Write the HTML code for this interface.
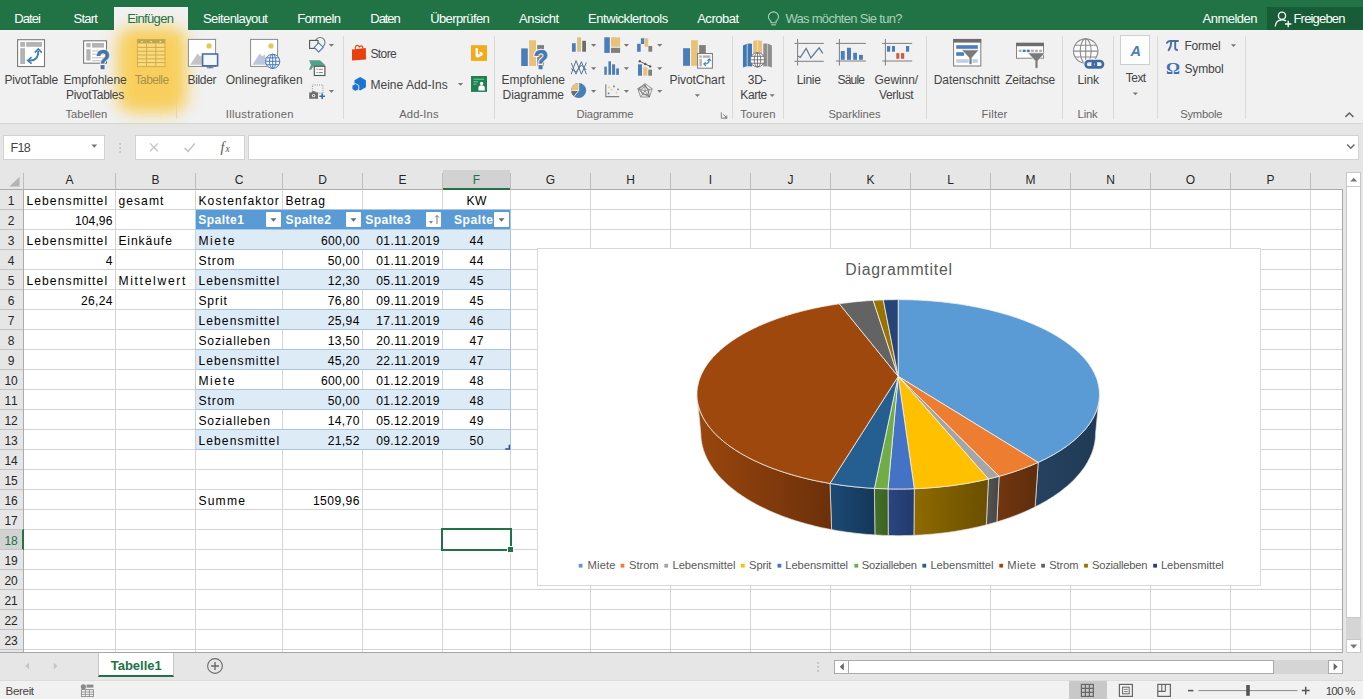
<!DOCTYPE html>
<html lang="de"><head><meta charset="utf-8"><title>Excel</title><style>

html,body{margin:0;padding:0}
body{width:1363px;height:699px;overflow:hidden;position:relative;background:#e6e6e6;font-family:"Liberation Sans",sans-serif}
.t{position:absolute;white-space:nowrap;line-height:1}
.a{position:absolute}
#tabs{left:0;top:0;width:1363px;height:30px;background:#217346}
#acttab{left:114px;top:7px;width:74px;height:24px;background:#f1f1f1}
#share{left:1267px;top:7px;width:96px;height:23px;background:#185c37}
#ribbon{left:0;top:30px;width:1363px;height:94px;background:#f1f1f1;border-bottom:1px solid #d6d6d6;box-sizing:border-box}
.sep{position:absolute;top:36px;width:1px;height:83px;background:#dadada}
#glowc{left:100px;top:7px;width:104px;height:120px;overflow:hidden;clip-path:polygon(14px 0,88px 0,88px 23px,104px 23px,104px 120px,0 120px,0 23px,14px 23px)}
#glow{left:17px;top:20px;width:70px;height:86px;border-radius:16px;background:#f8cf5c;filter:blur(8px)}
.box{position:absolute;background:#fff;border:1px solid #d2d2d2;box-sizing:border-box}
#sheet{left:0;top:170px;width:1343px;height:483px;background:#fff;overflow:hidden}
#colhdr{left:0;top:0;width:1343px;height:19px;background:#e6e6e6;border-bottom:1px solid #ababab}
#rowhdr{left:0;top:20px;width:23px;height:462px;background:#e6e6e6;border-right:1px solid #ababab}
.vl{position:absolute;top:20px;width:1px;height:462px;background:#d4d4d4}
.hl{position:absolute;left:24px;height:1px;width:1319px;background:#d4d4d4}
.rhl{position:absolute;left:0;width:23px;height:1px;background:#c4c4c4}
.chl{position:absolute;top:3px;width:1px;height:17px;background:#bdbdbd}

</style></head><body>
<div class="a" id="tabs"></div><div class="a" id="acttab"></div><div class="a" id="share"></div>
<div class="a" id="ribbon"></div>
<div class="sep" style="left:176px"></div>
<div class="sep" style="left:343px"></div>
<div class="sep" style="left:494px"></div>
<div class="sep" style="left:732px"></div>
<div class="sep" style="left:783px"></div>
<div class="sep" style="left:926px"></div>
<div class="sep" style="left:1062px"></div>
<div class="sep" style="left:1113px"></div>
<div class="sep" style="left:1157px"></div>
<div class="sep" style="left:1245px"></div>
<div class="a" id="glowc"><div class="a" id="glow"></div></div>
<div class="box" style="left:3px;top:135px;width:102px;height:25px"></div>
<div class="box" style="left:135px;top:135px;width:110px;height:25px"></div>
<div class="box" style="left:248px;top:135px;width:1111px;height:25px"></div>
<div class="a" id="sheet">
<div class="a" style="left:196px;top:40px;width:314px;height:19px;background:#5b9bd5"></div>
<div class="a" style="left:196px;top:60px;width:314px;height:19px;background:#ddebf7"></div>
<div class="a" style="left:196px;top:100px;width:314px;height:19px;background:#ddebf7"></div>
<div class="a" style="left:196px;top:140px;width:314px;height:19px;background:#ddebf7"></div>
<div class="a" style="left:196px;top:180px;width:314px;height:19px;background:#ddebf7"></div>
<div class="a" style="left:196px;top:220px;width:314px;height:19px;background:#ddebf7"></div>
<div class="a" style="left:196px;top:260px;width:314px;height:19px;background:#ddebf7"></div>
<div class="hl" style="top:39px"></div>
<div class="rhl" style="top:39px"></div>
<div class="hl" style="top:59px"></div>
<div class="rhl" style="top:59px"></div>
<div class="hl" style="top:79px"></div>
<div class="rhl" style="top:79px"></div>
<div class="hl" style="top:99px"></div>
<div class="rhl" style="top:99px"></div>
<div class="hl" style="top:119px"></div>
<div class="rhl" style="top:119px"></div>
<div class="hl" style="top:139px"></div>
<div class="rhl" style="top:139px"></div>
<div class="hl" style="top:159px"></div>
<div class="rhl" style="top:159px"></div>
<div class="hl" style="top:179px"></div>
<div class="rhl" style="top:179px"></div>
<div class="hl" style="top:199px"></div>
<div class="rhl" style="top:199px"></div>
<div class="hl" style="top:219px"></div>
<div class="rhl" style="top:219px"></div>
<div class="hl" style="top:239px"></div>
<div class="rhl" style="top:239px"></div>
<div class="hl" style="top:259px"></div>
<div class="rhl" style="top:259px"></div>
<div class="hl" style="top:279px"></div>
<div class="rhl" style="top:279px"></div>
<div class="hl" style="top:299px"></div>
<div class="rhl" style="top:299px"></div>
<div class="hl" style="top:319px"></div>
<div class="rhl" style="top:319px"></div>
<div class="hl" style="top:339px"></div>
<div class="rhl" style="top:339px"></div>
<div class="hl" style="top:359px"></div>
<div class="rhl" style="top:359px"></div>
<div class="hl" style="top:379px"></div>
<div class="rhl" style="top:379px"></div>
<div class="hl" style="top:399px"></div>
<div class="rhl" style="top:399px"></div>
<div class="hl" style="top:419px"></div>
<div class="rhl" style="top:419px"></div>
<div class="hl" style="top:439px"></div>
<div class="rhl" style="top:439px"></div>
<div class="hl" style="top:459px"></div>
<div class="rhl" style="top:459px"></div>
<div class="hl" style="top:479px"></div>
<div class="rhl" style="top:479px"></div>
<div class="vl" style="left:115px"></div>
<div class="vl" style="left:195px"></div>
<div class="vl" style="left:282px"></div>
<div class="vl" style="left:362px"></div>
<div class="vl" style="left:442px"></div>
<div class="vl" style="left:510px"></div>
<div class="vl" style="left:590px"></div>
<div class="vl" style="left:670px"></div>
<div class="vl" style="left:750px"></div>
<div class="vl" style="left:830px"></div>
<div class="vl" style="left:910px"></div>
<div class="vl" style="left:990px"></div>
<div class="vl" style="left:1070px"></div>
<div class="vl" style="left:1150px"></div>
<div class="vl" style="left:1230px"></div>
<div class="vl" style="left:1310px"></div>
<div class="a" style="left:196px;top:60px;width:314px;height:19px;background:#ddebf7"></div>
<div class="a" style="left:196px;top:100px;width:314px;height:19px;background:#ddebf7"></div>
<div class="a" style="left:196px;top:140px;width:314px;height:19px;background:#ddebf7"></div>
<div class="a" style="left:196px;top:180px;width:314px;height:19px;background:#ddebf7"></div>
<div class="a" style="left:196px;top:220px;width:314px;height:19px;background:#ddebf7"></div>
<div class="a" style="left:196px;top:260px;width:314px;height:19px;background:#ddebf7"></div>
<div class="a" style="left:196px;top:40px;width:314px;height:19px;background:#5b9bd5"></div>
<div class="a" style="left:196px;top:59px;width:315px;height:1px;background:#a9c6e4"></div>
<div class="a" style="left:196px;top:79px;width:315px;height:1px;background:#a9c6e4"></div>
<div class="a" style="left:196px;top:99px;width:315px;height:1px;background:#a9c6e4"></div>
<div class="a" style="left:196px;top:119px;width:315px;height:1px;background:#a9c6e4"></div>
<div class="a" style="left:196px;top:139px;width:315px;height:1px;background:#a9c6e4"></div>
<div class="a" style="left:196px;top:159px;width:315px;height:1px;background:#a9c6e4"></div>
<div class="a" style="left:196px;top:179px;width:315px;height:1px;background:#a9c6e4"></div>
<div class="a" style="left:196px;top:199px;width:315px;height:1px;background:#a9c6e4"></div>
<div class="a" style="left:196px;top:219px;width:315px;height:1px;background:#a9c6e4"></div>
<div class="a" style="left:196px;top:239px;width:315px;height:1px;background:#a9c6e4"></div>
<div class="a" style="left:196px;top:259px;width:315px;height:1px;background:#a9c6e4"></div>
<div class="a" style="left:196px;top:279px;width:315px;height:1px;background:#a9c6e4"></div>
<div class="a" style="left:196px;top:39px;width:315px;height:1px;background:#a9c6e4"></div>
<div class="a" style="left:510px;top:40px;width:1px;height:240px;background:#a9c6e4"></div>
<div class="a" style="left:195px;top:40px;width:1px;height:240px;background:#bcd0e6"></div>
<div class="a" style="left:266px;top:42px;width:15px;height:15px;background:#fff;border-radius:1px"></div>
<div class="a" style="left:346px;top:42px;width:15px;height:15px;background:#fff;border-radius:1px"></div>
<div class="a" style="left:426px;top:42px;width:15px;height:15px;background:#fff;border-radius:1px"></div>
<div class="a" style="left:494px;top:42px;width:15px;height:15px;background:#fff;border-radius:1px"></div>
<div class="a" id="colhdr"></div><div class="a" id="rowhdr"></div>
<div class="a" style="left:443px;top:0;width:67px;height:18px;background:#d2d2d2;border-bottom:2px solid #217346"></div>
<div class="a" style="left:0;top:359px;width:22px;height:21px;background:#d2d2d2;border-right:2px solid #217346"></div>
<div class="chl" style="left:23px"></div>
<div class="chl" style="left:115px"></div>
<div class="chl" style="left:195px"></div>
<div class="chl" style="left:282px"></div>
<div class="chl" style="left:362px"></div>
<div class="chl" style="left:442px"></div>
<div class="chl" style="left:510px"></div>
<div class="chl" style="left:590px"></div>
<div class="chl" style="left:670px"></div>
<div class="chl" style="left:750px"></div>
<div class="chl" style="left:830px"></div>
<div class="chl" style="left:910px"></div>
<div class="chl" style="left:990px"></div>
<div class="chl" style="left:1070px"></div>
<div class="chl" style="left:1150px"></div>
<div class="chl" style="left:1230px"></div>
<div class="chl" style="left:1310px"></div>
<div class="rhl" style="top:39px"></div>
<div class="rhl" style="top:59px"></div>
<div class="rhl" style="top:79px"></div>
<div class="rhl" style="top:99px"></div>
<div class="rhl" style="top:119px"></div>
<div class="rhl" style="top:139px"></div>
<div class="rhl" style="top:159px"></div>
<div class="rhl" style="top:179px"></div>
<div class="rhl" style="top:199px"></div>
<div class="rhl" style="top:219px"></div>
<div class="rhl" style="top:239px"></div>
<div class="rhl" style="top:259px"></div>
<div class="rhl" style="top:279px"></div>
<div class="rhl" style="top:299px"></div>
<div class="rhl" style="top:319px"></div>
<div class="rhl" style="top:339px"></div>
<div class="rhl" style="top:359px"></div>
<div class="rhl" style="top:379px"></div>
<div class="rhl" style="top:399px"></div>
<div class="rhl" style="top:419px"></div>
<div class="rhl" style="top:439px"></div>
<div class="rhl" style="top:459px"></div>
<div class="rhl" style="top:479px"></div>
<div class="a" style="left:441px;top:358px;width:67px;height:19px;border:2px solid #217346"></div>
<div class="a" style="left:508px;top:377px;width:5px;height:5px;background:#217346;border:1px solid #fff;margin:-1px"></div>
<div class="a" style="left:537px;top:78px;width:724px;height:338px;background:#fff;border:1px solid #d9d9d9;box-sizing:border-box"></div>
<div class="a" style="left:1342px;top:19px;width:1px;height:463px;background:#a6a6a6"></div>
<div class="a" style="left:0;top:482px;width:1343px;height:1px;background:#a6a6a6"></div>
</div>
<div class="a" style="left:0;top:680px;width:1363px;height:19px;background:#f1f1f1;border-top:1px solid #dcdcdc;box-sizing:border-box"></div>
<div class="a" style="left:98px;top:653px;width:76px;height:24px;background:#fff;border-bottom:2px solid #217346;box-sizing:border-box;border-left:1px solid #c8c8c8;border-right:1px solid #c8c8c8"></div>
<div class="box" style="left:1346px;top:172px;width:15px;height:15px;border-color:#c8c8c8"></div>
<div class="box" style="left:1346px;top:186px;width:15px;height:432px;border-color:#c8c8c8"></div>
<div class="a" style="left:1346px;top:618px;width:15px;height:21px;background:#d5d5d5"></div>
<div class="box" style="left:1346px;top:639px;width:15px;height:14px;border-color:#c8c8c8"></div>
<div class="box" style="left:834px;top:660px;width:15px;height:14px;border-color:#ababab"></div>
<div class="box" style="left:848px;top:660px;width:426px;height:14px;border-color:#ababab"></div>
<div class="a" style="left:1274px;top:660px;width:54px;height:14px;background:#d5d5d5"></div>
<div class="box" style="left:1328px;top:660px;width:15px;height:14px;border-color:#ababab"></div>
<div class="a" style="left:1069px;top:681px;width:38px;height:18px;background:#c8c8c8"></div>
<svg class="a" style="left:0;top:0" width="1363" height="699" viewBox="0 0 1363 699">
<defs><linearGradient id="sg0" gradientUnits="userSpaceOnUse" x1="1035.1" y1="0" x2="1099.4" y2="0"><stop offset="0" stop-color="#264260"/><stop offset="1" stop-color="#1f3a54"/></linearGradient><linearGradient id="sg1" gradientUnits="userSpaceOnUse" x1="996.9" y1="0" x2="1038.2" y2="0"><stop offset="0" stop-color="#713610"/><stop offset="1" stop-color="#5e2d0c"/></linearGradient><linearGradient id="sg2" gradientUnits="userSpaceOnUse" x1="986.3" y1="0" x2="999.1" y2="0"><stop offset="0" stop-color="#555555"/><stop offset="1" stop-color="#454545"/></linearGradient><linearGradient id="sg3" gradientUnits="userSpaceOnUse" x1="913.9" y1="0" x2="988.4" y2="0"><stop offset="0" stop-color="#8f6a00"/><stop offset="1" stop-color="#6a4f00"/></linearGradient><linearGradient id="sg4" gradientUnits="userSpaceOnUse" x1="888.0" y1="0" x2="914.3" y2="0"><stop offset="0" stop-color="#2a4580"/><stop offset="1" stop-color="#223a6c"/></linearGradient><linearGradient id="sg5" gradientUnits="userSpaceOnUse" x1="874.4" y1="0" x2="888.2" y2="0"><stop offset="0" stop-color="#457028"/><stop offset="1" stop-color="#3a6122"/></linearGradient><linearGradient id="sg6" gradientUnits="userSpaceOnUse" x1="830.0" y1="0" x2="874.9" y2="0"><stop offset="0" stop-color="#1c4a75"/><stop offset="1" stop-color="#14375a"/></linearGradient><linearGradient id="sg7" gradientUnits="userSpaceOnUse" x1="697.0" y1="0" x2="831.6" y2="0"><stop offset="0" stop-color="#9a460e"/><stop offset="1" stop-color="#6c300a"/></linearGradient></defs><path d="M1099.4,394.3 L1099.4,395.3 L1099.4,396.3 L1099.3,397.3 L1099.3,398.2 L1099.2,399.2 L1099.1,400.2 L1098.9,401.2 L1098.8,402.2 L1098.6,403.1 L1098.4,404.1 L1098.1,405.1 L1097.9,406.1 L1097.6,407.1 L1097.3,408.1 L1097.0,409.1 L1096.7,410.1 L1096.3,411.0 L1095.9,412.0 L1095.5,413.0 L1095.1,414.0 L1094.6,415.0 L1094.1,416.0 L1093.6,417.0 L1093.1,417.9 L1092.5,418.9 L1092.0,419.9 L1091.4,420.9 L1090.7,421.9 L1090.1,422.9 L1089.4,423.8 L1088.7,424.8 L1088.0,425.8 L1087.3,426.8 L1086.5,427.7 L1085.7,428.7 L1084.9,429.7 L1084.1,430.6 L1083.2,431.6 L1082.3,432.6 L1081.4,433.5 L1080.5,434.5 L1079.5,435.4 L1078.5,436.4 L1077.5,437.3 L1076.5,438.2 L1075.5,439.2 L1074.4,440.1 L1073.3,441.0 L1072.2,441.9 L1071.0,442.9 L1069.8,443.8 L1068.6,444.7 L1067.4,445.6 L1066.2,446.5 L1064.9,447.4 L1063.6,448.3 L1062.3,449.2 L1061.0,450.0 L1059.6,450.9 L1058.2,451.8 L1056.8,452.6 L1055.4,453.5 L1053.9,454.3 L1052.5,455.2 L1051.0,456.0 L1049.4,456.8 L1047.9,457.6 L1046.3,458.4 L1044.7,459.2 L1043.1,460.0 L1041.5,460.8 L1039.8,461.6 L1038.2,462.4 L1035.1,506.9 L1036.8,506.1 L1038.4,505.2 L1040.0,504.4 L1041.6,503.5 L1043.1,502.7 L1044.7,501.8 L1046.2,500.9 L1047.7,500.0 L1049.1,499.1 L1050.6,498.2 L1052.0,497.3 L1053.4,496.4 L1054.8,495.5 L1056.2,494.5 L1057.5,493.6 L1058.8,492.7 L1060.1,491.7 L1061.4,490.7 L1062.6,489.8 L1063.8,488.8 L1065.0,487.8 L1066.2,486.9 L1067.4,485.9 L1068.5,484.9 L1069.6,483.9 L1070.7,482.9 L1071.8,481.9 L1072.8,480.9 L1073.8,479.9 L1074.8,478.9 L1075.8,477.8 L1076.7,476.8 L1077.6,475.8 L1078.5,474.8 L1079.4,473.7 L1080.3,472.7 L1081.1,471.6 L1081.9,470.6 L1082.7,469.6 L1083.4,468.5 L1084.2,467.5 L1084.9,466.4 L1085.6,465.4 L1086.2,464.3 L1086.9,463.2 L1087.5,462.2 L1088.1,461.1 L1088.6,460.1 L1089.2,459.0 L1089.7,457.9 L1090.2,456.9 L1090.7,455.8 L1091.1,454.8 L1091.6,453.7 L1092.0,452.6 L1092.4,451.6 L1092.7,450.5 L1093.1,449.4 L1093.4,448.4 L1093.7,447.3 L1094.0,446.2 L1094.2,445.2 L1094.5,444.1 L1094.7,443.0 L1094.9,442.0 L1095.0,440.9 L1095.2,439.9 L1095.3,438.8 L1095.4,437.7 L1095.5,436.7 L1095.5,435.6 L1095.6,434.6 L1095.6,433.5Z" fill="url(#sg0)" stroke="#e8e4dc" stroke-width="0.7" stroke-linejoin="round"/><path d="M1038.2,462.4 L1036.4,463.2 L1034.6,463.9 L1032.8,464.7 L1031.0,465.5 L1029.2,466.2 L1027.3,467.0 L1025.4,467.7 L1023.5,468.4 L1021.6,469.1 L1019.7,469.8 L1017.7,470.5 L1015.7,471.2 L1013.7,471.9 L1011.7,472.5 L1009.6,473.2 L1007.6,473.8 L1005.5,474.5 L1003.4,475.1 L1001.3,475.7 L999.1,476.3 L996.9,521.9 L999.0,521.3 L1001.0,520.6 L1003.1,519.9 L1005.1,519.3 L1007.2,518.6 L1009.2,517.9 L1011.1,517.2 L1013.1,516.4 L1015.1,515.7 L1017.0,515.0 L1018.9,514.2 L1020.8,513.4 L1022.6,512.7 L1024.5,511.9 L1026.3,511.1 L1028.1,510.3 L1029.9,509.4 L1031.7,508.6 L1033.4,507.8 L1035.1,506.9Z" fill="url(#sg1)" stroke="#e8e4dc" stroke-width="0.7" stroke-linejoin="round"/><path d="M999.1,476.3 L997.0,476.8 L994.9,477.4 L992.7,477.9 L990.5,478.5 L988.4,479.0 L986.3,524.8 L988.5,524.3 L990.6,523.7 L992.7,523.1 L994.8,522.5 L996.9,521.9Z" fill="url(#sg2)" stroke="#e8e4dc" stroke-width="0.7" stroke-linejoin="round"/><path d="M988.4,479.0 L986.1,479.5 L983.9,480.0 L981.7,480.5 L979.4,481.0 L977.1,481.4 L974.8,481.9 L972.5,482.3 L970.2,482.8 L967.9,483.2 L965.5,483.6 L963.2,484.0 L960.8,484.3 L958.5,484.7 L956.1,485.0 L953.7,485.4 L951.3,485.7 L948.9,486.0 L946.4,486.3 L944.0,486.5 L941.6,486.8 L939.1,487.1 L936.6,487.3 L934.2,487.5 L931.7,487.7 L929.2,487.9 L926.8,488.1 L924.3,488.2 L921.8,488.4 L919.3,488.5 L916.8,488.6 L914.3,488.7 L913.9,535.3 L916.4,535.2 L918.8,535.1 L921.2,535.0 L923.7,534.8 L926.1,534.6 L928.5,534.4 L931.0,534.2 L933.4,534.0 L935.8,533.8 L938.2,533.5 L940.6,533.3 L943.0,533.0 L945.3,532.7 L947.7,532.4 L950.1,532.1 L952.4,531.7 L954.8,531.4 L957.1,531.0 L959.4,530.6 L961.7,530.2 L964.0,529.8 L966.3,529.3 L968.6,528.9 L970.9,528.4 L973.1,528.0 L975.3,527.5 L977.6,527.0 L979.8,526.5 L982.0,525.9 L984.2,525.4 L986.3,524.8Z" fill="url(#sg3)" stroke="#e8e4dc" stroke-width="0.7" stroke-linejoin="round"/><path d="M914.3,488.7 L911.7,488.8 L909.0,488.9 L906.4,489.0 L903.8,489.0 L901.2,489.0 L898.5,489.0 L895.9,489.0 L893.3,489.0 L890.6,489.0 L888.0,488.9 L888.2,535.5 L890.8,535.6 L893.4,535.6 L895.9,535.7 L898.5,535.7 L901.1,535.7 L903.7,535.6 L906.2,535.6 L908.8,535.5 L911.4,535.4 L913.9,535.3Z" fill="url(#sg4)" stroke="#e8e4dc" stroke-width="0.7" stroke-linejoin="round"/><path d="M888.0,488.9 L885.3,488.8 L882.5,488.7 L879.8,488.6 L877.1,488.5 L874.4,488.4 L874.9,534.9 L877.6,535.1 L880.2,535.2 L882.9,535.4 L885.6,535.5 L888.2,535.5Z" fill="url(#sg5)" stroke="#e8e4dc" stroke-width="0.7" stroke-linejoin="round"/><path d="M874.4,488.4 L871.8,488.2 L869.3,488.1 L866.8,487.9 L864.3,487.7 L861.8,487.5 L859.3,487.2 L856.8,487.0 L854.3,486.8 L851.9,486.5 L849.4,486.2 L846.9,485.9 L844.5,485.6 L842.1,485.3 L839.6,484.9 L837.2,484.6 L834.8,484.2 L832.4,483.8 L830.0,483.4 L831.6,529.6 L833.9,530.1 L836.2,530.5 L838.6,530.9 L841.0,531.2 L843.3,531.6 L845.7,532.0 L848.1,532.3 L850.5,532.6 L852.9,532.9 L855.3,533.2 L857.8,533.5 L860.2,533.7 L862.6,534.0 L865.1,534.2 L867.5,534.4 L870.0,534.6 L872.4,534.8 L874.9,534.9Z" fill="url(#sg6)" stroke="#e8e4dc" stroke-width="0.7" stroke-linejoin="round"/><path d="M830.0,483.4 L827.8,483.0 L825.5,482.6 L823.3,482.2 L821.0,481.8 L818.8,481.3 L816.6,480.9 L814.4,480.4 L812.2,479.9 L810.0,479.5 L807.9,479.0 L805.7,478.4 L803.6,477.9 L801.5,477.4 L799.4,476.8 L797.3,476.3 L795.2,475.7 L793.2,475.1 L791.2,474.5 L789.2,473.9 L787.2,473.3 L785.2,472.7 L783.2,472.1 L781.3,471.4 L779.4,470.8 L777.5,470.1 L775.6,469.4 L773.7,468.7 L771.9,468.0 L770.0,467.3 L768.2,466.6 L766.4,465.9 L764.7,465.2 L762.9,464.4 L761.2,463.7 L759.5,462.9 L757.8,462.2 L756.1,461.4 L754.5,460.6 L752.9,459.8 L751.3,459.0 L749.7,458.2 L748.1,457.4 L746.6,456.6 L745.1,455.8 L743.6,455.0 L742.1,454.1 L740.7,453.3 L739.3,452.4 L737.9,451.6 L736.5,450.7 L735.2,449.8 L733.8,449.0 L732.5,448.1 L731.2,447.2 L730.0,446.3 L728.8,445.4 L727.5,444.5 L726.4,443.6 L725.2,442.7 L724.0,441.8 L722.9,440.9 L721.8,439.9 L720.8,439.0 L719.7,438.1 L718.7,437.2 L717.7,436.2 L716.7,435.3 L715.8,434.3 L714.9,433.4 L714.0,432.4 L713.1,431.5 L712.2,430.5 L711.4,429.5 L710.6,428.6 L709.8,427.6 L709.0,426.7 L708.3,425.7 L707.6,424.7 L706.9,423.7 L706.2,422.8 L705.6,421.8 L705.0,420.8 L704.4,419.8 L703.8,418.8 L703.3,417.9 L702.7,416.9 L702.2,415.9 L701.8,414.9 L701.3,413.9 L700.9,412.9 L700.5,412.0 L700.1,411.0 L699.7,410.0 L699.4,409.0 L699.1,408.0 L698.8,407.0 L698.5,406.1 L698.3,405.1 L698.0,404.1 L697.8,403.1 L697.6,402.1 L697.5,401.2 L697.3,400.2 L697.2,399.2 L697.1,398.2 L697.1,397.2 L697.0,396.3 L697.0,395.3 L697.0,394.3 L700.8,433.5 L700.8,434.6 L700.9,435.6 L700.9,436.7 L701.0,437.7 L701.1,438.8 L701.2,439.8 L701.4,440.9 L701.5,441.9 L701.7,443.0 L701.9,444.1 L702.2,445.1 L702.4,446.2 L702.7,447.2 L703.0,448.3 L703.3,449.4 L703.6,450.4 L704.0,451.5 L704.4,452.6 L704.8,453.6 L705.2,454.7 L705.7,455.7 L706.2,456.8 L706.7,457.9 L707.2,458.9 L707.7,460.0 L708.3,461.0 L708.9,462.1 L709.5,463.1 L710.1,464.2 L710.8,465.2 L711.5,466.3 L712.2,467.3 L712.9,468.4 L713.6,469.4 L714.4,470.5 L715.2,471.5 L716.0,472.6 L716.9,473.6 L717.7,474.6 L718.6,475.6 L719.5,476.7 L720.5,477.7 L721.4,478.7 L722.4,479.7 L723.4,480.7 L724.5,481.7 L725.5,482.7 L726.6,483.7 L727.7,484.7 L728.8,485.7 L730.0,486.7 L731.1,487.7 L732.3,488.6 L733.5,489.6 L734.8,490.6 L736.0,491.5 L737.3,492.5 L738.6,493.4 L740.0,494.3 L741.3,495.3 L742.7,496.2 L744.1,497.1 L745.5,498.0 L746.9,498.9 L748.4,499.8 L749.9,500.7 L751.4,501.6 L752.9,502.5 L754.5,503.3 L756.0,504.2 L757.6,505.0 L759.2,505.9 L760.9,506.7 L762.5,507.5 L764.2,508.3 L765.9,509.1 L767.6,509.9 L769.3,510.7 L771.1,511.5 L772.8,512.3 L774.6,513.0 L776.4,513.8 L778.3,514.5 L780.1,515.2 L782.0,516.0 L783.9,516.7 L785.8,517.4 L787.7,518.0 L789.6,518.7 L791.6,519.4 L793.5,520.0 L795.5,520.7 L797.5,521.3 L799.6,521.9 L801.6,522.5 L803.6,523.1 L805.7,523.7 L807.8,524.2 L809.9,524.8 L812.0,525.3 L814.1,525.9 L816.3,526.4 L818.4,526.9 L820.6,527.4 L822.8,527.9 L824.9,528.3 L827.1,528.8 L829.4,529.2 L831.6,529.6Z" fill="url(#sg7)" stroke="#e8e4dc" stroke-width="0.7" stroke-linejoin="round"/><path d="M898.2,376.4 L898.2,299.6 L899.9,299.6 L901.5,299.7 L903.2,299.7 L904.9,299.7 L906.5,299.7 L908.2,299.8 L909.9,299.8 L911.5,299.8 L913.2,299.9 L914.8,300.0 L916.5,300.0 L918.2,300.1 L919.8,300.2 L921.5,300.3 L923.1,300.4 L924.8,300.5 L926.4,300.6 L928.1,300.7 L929.8,300.8 L931.4,300.9 L933.0,301.1 L934.7,301.2 L936.3,301.4 L938.0,301.5 L939.6,301.7 L941.3,301.8 L942.9,302.0 L944.5,302.2 L946.2,302.4 L947.8,302.6 L949.4,302.8 L951.0,303.0 L952.6,303.2 L954.3,303.4 L955.9,303.6 L957.5,303.8 L959.1,304.1 L960.7,304.3 L962.3,304.6 L963.9,304.8 L965.5,305.1 L967.1,305.4 L968.7,305.6 L970.2,305.9 L971.8,306.2 L973.4,306.5 L975.0,306.8 L976.5,307.1 L978.1,307.4 L979.6,307.7 L981.2,308.1 L982.7,308.4 L984.3,308.7 L985.8,309.1 L987.4,309.4 L988.9,309.8 L990.4,310.2 L991.9,310.5 L993.4,310.9 L994.9,311.3 L996.4,311.7 L997.9,312.1 L999.4,312.5 L1000.9,312.9 L1002.4,313.3 L1003.8,313.7 L1005.3,314.2 L1006.8,314.6 L1008.2,315.0 L1009.7,315.5 L1011.1,315.9 L1012.5,316.4 L1014.0,316.9 L1015.4,317.3 L1016.8,317.8 L1018.2,318.3 L1019.6,318.8 L1021.0,319.3 L1022.3,319.8 L1023.7,320.3 L1025.1,320.8 L1026.4,321.4 L1027.8,321.9 L1029.1,322.4 L1030.5,323.0 L1031.8,323.5 L1033.1,324.1 L1034.4,324.6 L1035.7,325.2 L1037.0,325.8 L1038.3,326.3 L1039.5,326.9 L1040.8,327.5 L1042.1,328.1 L1043.3,328.7 L1044.5,329.3 L1045.8,329.9 L1047.0,330.6 L1048.2,331.2 L1049.4,331.8 L1050.5,332.5 L1051.7,333.1 L1052.9,333.8 L1054.0,334.4 L1055.2,335.1 L1056.3,335.7 L1057.4,336.4 L1058.5,337.1 L1059.6,337.8 L1060.7,338.5 L1061.8,339.2 L1062.8,339.9 L1063.9,340.6 L1064.9,341.3 L1065.9,342.0 L1066.9,342.7 L1067.9,343.5 L1068.9,344.2 L1069.9,344.9 L1070.9,345.7 L1071.8,346.4 L1072.7,347.2 L1073.7,348.0 L1074.6,348.7 L1075.4,349.5 L1076.3,350.3 L1077.2,351.1 L1078.0,351.8 L1078.9,352.6 L1079.7,353.4 L1080.5,354.2 L1081.3,355.0 L1082.1,355.9 L1082.8,356.7 L1083.6,357.5 L1084.3,358.3 L1085.0,359.2 L1085.7,360.0 L1086.4,360.8 L1087.1,361.7 L1087.8,362.5 L1088.4,363.4 L1089.0,364.2 L1089.6,365.1 L1090.2,366.0 L1090.8,366.9 L1091.3,367.7 L1091.9,368.6 L1092.4,369.5 L1092.9,370.4 L1093.4,371.3 L1093.9,372.2 L1094.3,373.1 L1094.7,374.0 L1095.2,374.9 L1095.5,375.8 L1095.9,376.7 L1096.3,377.6 L1096.6,378.6 L1097.0,379.5 L1097.3,380.4 L1097.5,381.3 L1097.8,382.3 L1098.0,383.2 L1098.3,384.2 L1098.5,385.1 L1098.7,386.0 L1098.8,387.0 L1099.0,387.9 L1099.1,388.9 L1099.2,389.8 L1099.3,390.8 L1099.4,391.8 L1099.4,392.7 L1099.4,393.7 L1099.4,394.7 L1099.4,395.6 L1099.4,396.6 L1099.3,397.6 L1099.2,398.5 L1099.1,399.5 L1099.0,400.5 L1098.9,401.5 L1098.7,402.5 L1098.5,403.4 L1098.3,404.4 L1098.1,405.4 L1097.8,406.4 L1097.5,407.4 L1097.2,408.3 L1096.9,409.3 L1096.6,410.3 L1096.2,411.3 L1095.8,412.3 L1095.4,413.3 L1094.9,414.2 L1094.5,415.2 L1094.0,416.2 L1093.5,417.2 L1093.0,418.2 L1092.4,419.2 L1091.8,420.1 L1091.2,421.1 L1090.6,422.1 L1090.0,423.1 L1089.3,424.0 L1088.6,425.0 L1087.9,426.0 L1087.1,426.9 L1086.4,427.9 L1085.6,428.9 L1084.8,429.8 L1083.9,430.8 L1083.1,431.7 L1082.2,432.7 L1081.3,433.7 L1080.3,434.6 L1079.4,435.5 L1078.4,436.5 L1077.4,437.4 L1076.4,438.4 L1075.3,439.3 L1074.3,440.2 L1073.2,441.1 L1072.0,442.1 L1070.9,443.0 L1069.7,443.9 L1068.5,444.8 L1067.3,445.7 L1066.1,446.6 L1064.8,447.5 L1063.5,448.3 L1062.2,449.2 L1060.9,450.1 L1059.5,451.0 L1058.1,451.8 L1056.7,452.7 L1055.3,453.5 L1053.9,454.4 L1052.4,455.2 L1050.9,456.0 L1049.4,456.8 L1047.8,457.7 L1046.3,458.5 L1044.7,459.3 L1043.1,460.0 L1041.5,460.8 L1039.8,461.6 L1038.2,462.4Z" fill="#5B9BD5" stroke="#f4f1ea" stroke-width="0.8" stroke-linejoin="round"/><path d="M898.2,376.4 L1038.2,462.4 L1036.4,463.2 L1034.6,463.9 L1032.8,464.7 L1031.0,465.5 L1029.2,466.2 L1027.3,467.0 L1025.4,467.7 L1023.5,468.4 L1021.6,469.1 L1019.7,469.8 L1017.7,470.5 L1015.7,471.2 L1013.7,471.9 L1011.7,472.5 L1009.6,473.2 L1007.6,473.8 L1005.5,474.5 L1003.4,475.1 L1001.3,475.7 L999.1,476.3Z" fill="#ED7D31" stroke="#f4f1ea" stroke-width="0.8" stroke-linejoin="round"/><path d="M898.2,376.4 L999.1,476.3 L997.0,476.8 L994.9,477.4 L992.7,477.9 L990.5,478.5 L988.4,479.0Z" fill="#A5A5A5" stroke="#f4f1ea" stroke-width="0.8" stroke-linejoin="round"/><path d="M898.2,376.4 L988.4,479.0 L986.1,479.5 L983.9,480.0 L981.7,480.5 L979.4,481.0 L977.1,481.4 L974.8,481.9 L972.5,482.3 L970.2,482.8 L967.9,483.2 L965.5,483.6 L963.2,484.0 L960.8,484.3 L958.5,484.7 L956.1,485.0 L953.7,485.4 L951.3,485.7 L948.9,486.0 L946.4,486.3 L944.0,486.5 L941.6,486.8 L939.1,487.1 L936.6,487.3 L934.2,487.5 L931.7,487.7 L929.2,487.9 L926.8,488.1 L924.3,488.2 L921.8,488.4 L919.3,488.5 L916.8,488.6 L914.3,488.7Z" fill="#FFC000" stroke="#f4f1ea" stroke-width="0.8" stroke-linejoin="round"/><path d="M898.2,376.4 L914.3,488.7 L911.7,488.8 L909.0,488.9 L906.4,489.0 L903.8,489.0 L901.2,489.0 L898.5,489.0 L895.9,489.0 L893.3,489.0 L890.6,489.0 L888.0,488.9Z" fill="#4472C4" stroke="#f4f1ea" stroke-width="0.8" stroke-linejoin="round"/><path d="M898.2,376.4 L888.0,488.9 L885.3,488.8 L882.5,488.7 L879.8,488.6 L877.1,488.5 L874.4,488.4Z" fill="#70AD47" stroke="#f4f1ea" stroke-width="0.8" stroke-linejoin="round"/><path d="M898.2,376.4 L874.4,488.4 L871.8,488.2 L869.3,488.1 L866.8,487.9 L864.3,487.7 L861.8,487.5 L859.3,487.2 L856.8,487.0 L854.3,486.8 L851.9,486.5 L849.4,486.2 L846.9,485.9 L844.5,485.6 L842.1,485.3 L839.6,484.9 L837.2,484.6 L834.8,484.2 L832.4,483.8 L830.0,483.4Z" fill="#255E91" stroke="#f4f1ea" stroke-width="0.8" stroke-linejoin="round"/><path d="M898.2,376.4 L830.0,483.4 L827.8,483.0 L825.5,482.6 L823.3,482.2 L821.0,481.8 L818.8,481.4 L816.6,480.9 L814.4,480.4 L812.2,480.0 L810.0,479.5 L807.9,479.0 L805.8,478.4 L803.6,477.9 L801.5,477.4 L799.4,476.8 L797.3,476.3 L795.3,475.7 L793.2,475.1 L791.2,474.5 L789.2,473.9 L787.2,473.3 L785.2,472.7 L783.3,472.1 L781.3,471.4 L779.4,470.8 L777.5,470.1 L775.6,469.4 L773.8,468.8 L771.9,468.1 L770.1,467.4 L768.3,466.7 L766.5,465.9 L764.7,465.2 L763.0,464.5 L761.3,463.7 L759.6,463.0 L757.9,462.2 L756.2,461.4 L754.6,460.7 L752.9,459.9 L751.3,459.1 L749.8,458.3 L748.2,457.5 L746.7,456.7 L745.2,455.8 L743.7,455.0 L742.2,454.2 L740.8,453.3 L739.4,452.5 L738.0,451.6 L736.6,450.8 L735.2,449.9 L733.9,449.0 L732.6,448.1 L731.3,447.3 L730.1,446.4 L728.8,445.5 L727.6,444.6 L726.4,443.7 L725.3,442.8 L724.1,441.9 L723.0,440.9 L721.9,440.0 L720.8,439.1 L719.8,438.2 L718.8,437.2 L717.8,436.3 L716.8,435.3 L715.8,434.4 L714.9,433.4 L714.0,432.5 L713.1,431.5 L712.3,430.6 L711.5,429.6 L710.6,428.7 L709.9,427.7 L709.1,426.7 L708.4,425.8 L707.7,424.8 L707.0,423.8 L706.3,422.8 L705.7,421.9 L705.0,420.9 L704.4,419.9 L703.9,418.9 L703.3,418.0 L702.8,417.0 L702.3,416.0 L701.8,415.0 L701.4,414.0 L700.9,413.0 L700.5,412.1 L700.1,411.1 L699.8,410.1 L699.4,409.1 L699.1,408.1 L698.8,407.1 L698.5,406.2 L698.3,405.2 L698.1,404.2 L697.8,403.2 L697.7,402.2 L697.5,401.3 L697.4,400.3 L697.2,399.3 L697.1,398.3 L697.1,397.4 L697.0,396.4 L697.0,395.4 L697.0,394.5 L697.0,393.5 L697.0,392.5 L697.0,391.6 L697.1,390.6 L697.2,389.6 L697.3,388.7 L697.4,387.7 L697.6,386.8 L697.8,385.8 L698.0,384.9 L698.2,383.9 L698.4,383.0 L698.7,382.1 L698.9,381.1 L699.2,380.2 L699.5,379.3 L699.8,378.4 L700.2,377.4 L700.6,376.5 L700.9,375.6 L701.3,374.7 L701.8,373.8 L702.2,372.9 L702.6,372.0 L703.1,371.1 L703.6,370.2 L704.1,369.3 L704.6,368.4 L705.2,367.5 L705.7,366.7 L706.3,365.8 L706.9,364.9 L707.5,364.1 L708.1,363.2 L708.8,362.3 L709.4,361.5 L710.1,360.7 L710.8,359.8 L711.5,359.0 L712.2,358.1 L713.0,357.3 L713.7,356.5 L714.5,355.7 L715.3,354.9 L716.1,354.1 L716.9,353.3 L717.7,352.5 L718.5,351.7 L719.4,350.9 L720.3,350.1 L721.1,349.3 L722.0,348.6 L722.9,347.8 L723.9,347.0 L724.8,346.3 L725.8,345.5 L726.7,344.8 L727.7,344.0 L728.7,343.3 L729.7,342.6 L730.7,341.8 L731.7,341.1 L732.8,340.4 L733.8,339.7 L734.9,339.0 L735.9,338.3 L737.0,337.6 L738.1,336.9 L739.2,336.3 L740.4,335.6 L741.5,334.9 L742.6,334.3 L743.8,333.6 L744.9,333.0 L746.1,332.3 L747.3,331.7 L748.5,331.0 L749.7,330.4 L750.9,329.8 L752.1,329.2 L753.4,328.6 L754.6,328.0 L755.9,327.4 L757.1,326.8 L758.4,326.2 L759.7,325.6 L761.0,325.1 L762.3,324.5 L763.6,323.9 L764.9,323.4 L766.2,322.8 L767.6,322.3 L768.9,321.8 L770.3,321.2 L771.6,320.7 L773.0,320.2 L774.4,319.7 L775.7,319.2 L777.1,318.7 L778.5,318.2 L779.9,317.7 L781.3,317.2 L782.8,316.8 L784.2,316.3 L785.6,315.8 L787.1,315.4 L788.5,314.9 L790.0,314.5 L791.4,314.1 L792.9,313.6 L794.3,313.2 L795.8,312.8 L797.3,312.4 L798.8,312.0 L800.3,311.6 L801.8,311.2 L803.3,310.8 L804.8,310.5 L806.3,310.1 L807.9,309.7 L809.4,309.4 L810.9,309.0 L812.5,308.7 L814.0,308.3 L815.5,308.0 L817.1,307.7 L818.7,307.4 L820.2,307.0 L821.8,306.7 L823.4,306.4 L824.9,306.1 L826.5,305.9 L828.1,305.6 L829.7,305.3 L831.3,305.0 L832.9,304.8 L834.5,304.5 L836.1,304.3 L837.7,304.0 L839.3,303.8Z" fill="#9E480E" stroke="#f4f1ea" stroke-width="0.8" stroke-linejoin="round"/><path d="M898.2,376.4 L839.3,303.8 L840.9,303.6 L842.6,303.3 L844.3,303.1 L846.0,302.9 L847.7,302.7 L849.3,302.5 L851.0,302.3 L852.7,302.1 L854.4,301.9 L856.1,301.7 L857.8,301.6 L859.5,301.4 L861.2,301.3 L862.9,301.1 L864.6,301.0 L866.4,300.8 L868.1,300.7 L869.8,300.6 L871.5,300.5 L873.2,300.4Z" fill="#636363" stroke="#f4f1ea" stroke-width="0.8" stroke-linejoin="round"/><path d="M898.2,376.4 L873.2,300.4 L874.9,300.3 L876.6,300.2 L878.3,300.1 L880.0,300.0 L881.6,300.0 L883.3,299.9Z" fill="#997300" stroke="#f4f1ea" stroke-width="0.8" stroke-linejoin="round"/><path d="M898.2,376.4 L883.3,299.9 L885.2,299.8 L887.0,299.8 L888.9,299.7 L890.8,299.7 L892.6,299.7 L894.5,299.7 L896.3,299.6 L898.2,299.6Z" fill="#264478" stroke="#f4f1ea" stroke-width="0.8" stroke-linejoin="round"/>
<rect x="578.7" y="563.8" width="3.8" height="3.8" fill="#5B9BD5"/>
<rect x="620.6" y="563.8" width="3.8" height="3.8" fill="#ED7D31"/>
<rect x="664.3" y="563.8" width="3.8" height="3.8" fill="#A5A5A5"/>
<rect x="740.9" y="563.8" width="3.8" height="3.8" fill="#FFC000"/>
<rect x="777.5" y="563.8" width="3.8" height="3.8" fill="#4472C4"/>
<rect x="854.4" y="563.8" width="3.8" height="3.8" fill="#70AD47"/>
<rect x="922.4" y="563.8" width="3.8" height="3.8" fill="#255E91"/>
<rect x="999.3" y="563.8" width="3.8" height="3.8" fill="#9E480E"/>
<rect x="1041.2" y="563.8" width="3.8" height="3.8" fill="#636363"/>
<rect x="1084.1" y="563.8" width="3.8" height="3.8" fill="#997300"/>
<rect x="1153.2" y="563.8" width="3.8" height="3.8" fill="#264478"/>
<g fill="none" stroke="#abd0bb" stroke-width="1.1"><path d="M770.9,22.8 v-1.6 c-1.6,-1.2 -2.5,-2.4 -2.5,-4.2 a5.1,5.1 0 0 1 10.2,0 c0,1.8 -0.9,3 -2.5,4.2 v1.6 z"/><path d="M771.2,24.8 h4.6"/></g>
<g fill="none" stroke="#fff" stroke-width="1.3"><circle cx="1282" cy="15.8" r="3.6"/><path d="M1275.2,26.5 c0.4,-4.3 3,-6.6 6.8,-6.6 c1.6,0 3,0.4 4,1.2"/><path d="M1288.2,20.8 v6.4 M1285,24 h6.4"/></g>
<rect x="17.60" y="39.70" width="26.90" height="26.80" fill="#fff" stroke="#7a7a7a" stroke-width="1.1"/>
<rect x="20.20" y="42.00" width="4.80" height="4.80" fill="#b3b3b3" /><rect x="26.20" y="42.00" width="15.80" height="4.80" fill="#b3b3b3" /><rect x="20.20" y="48.20" width="4.80" height="15.80" fill="#b3b3b3" />
<path d="M29,60.4 c6.5,0.6 9.5,-3.2 9.3,-9.5" fill="none" stroke="#3f7fb3" stroke-width="1.9"/>
<path d="M31.6,57.2 l-3.8,3.2 l3.8,3.2 M34.8,52.6 l3.5,-3.6 l3.5,3.6" fill="none" stroke="#3f7fb3" stroke-width="1.7"/>
<rect x="83.60" y="40.80" width="22.90" height="22.40" fill="#fff" stroke="#7a7a7a" stroke-width="1.1"/>
<rect x="86.30" y="43.00" width="4.30" height="4.30" fill="#b3b3b3" /><rect x="92.00" y="43.00" width="12.00" height="4.60" fill="#b3b3b3" /><rect x="86.30" y="49.20" width="4.30" height="11.40" fill="#b3b3b3" />
<rect x="92.00" y="50.20" width="12.00" height="1.40" fill="#d0d0d0" />
<rect x="92.00" y="53.60" width="12.00" height="1.40" fill="#d0d0d0" />
<rect x="92.00" y="57.00" width="12.00" height="1.40" fill="#d0d0d0" />
<rect x="92.00" y="60.00" width="12.00" height="1.40" fill="#d0d0d0" />
<g transform="translate(95.8,68.7) scale(0.86,1)" font-family="Liberation Sans" font-weight="bold" font-size="27.5"><text fill="#f4f7fa" stroke="#f4f7fa" stroke-width="2" stroke-linejoin="round">?</text><text fill="#4474a6" stroke="#4474a6" stroke-width="0.5">?</text></g>
<rect x="137.40" y="39.40" width="27.60" height="27.20" fill="#fadb7c" stroke="#cfab4a" stroke-width="0.9"/>
<rect x="137.40" y="39.40" width="27.60" height="4.00" fill="#bfa452" />
<path d="M146.6,43.6 V66.4" stroke="#cfab4a" stroke-width="1"/>
<path d="M155.8,43.6 V66.4" stroke="#cfab4a" stroke-width="1"/>
<path d="M137.4,47.4 H165" stroke="#cfab4a" stroke-width="1"/>
<path d="M137.4,51.2 H165" stroke="#cfab4a" stroke-width="1"/>
<path d="M137.4,55.0 H165" stroke="#cfab4a" stroke-width="1"/>
<path d="M137.4,58.8 H165" stroke="#cfab4a" stroke-width="1"/>
<path d="M137.4,62.6 H165" stroke="#cfab4a" stroke-width="1"/>
<path d="M140.70,41.05 h2.60 l-1.30,1.50 z" fill="#fbe6a8"/>
<path d="M149.90,41.05 h2.60 l-1.30,1.50 z" fill="#fbe6a8"/>
<path d="M159.10,41.05 h2.60 l-1.30,1.50 z" fill="#fbe6a8"/>
<rect x="188.40" y="39.40" width="27.20" height="27.00" fill="#fff" stroke="#8a8a8a" stroke-width="1"/>
<circle cx="209.1" cy="45.9" r="2.6" fill="#e3c75f"/>
<path d="M190.2,64.8 L197.6,53.6 L200.2,56.6 L202.4,54.6 L207,64.8 Z" fill="#c4c4c4"/>
<rect x="202.60" y="54.00" width="15.00" height="11.80" fill="#f4f8fc" stroke="#4a6fa5" stroke-width="1.6"/>
<path d="M206.8,67.8 h6.6 M210.1,66 v1.6" stroke="#4a6fa5" stroke-width="1.1"/>
<rect x="250.60" y="39.40" width="27.00" height="27.00" fill="#fff" stroke="#8a8a8a" stroke-width="1"/>
<circle cx="271" cy="45.9" r="2.6" fill="#e3c75f"/>
<path d="M252.4,64.8 L259.8,53.4 L262.4,56.4 L264.4,54.6 L269,64.8 Z" fill="#bcc7dc"/>
<g fill="none" stroke="#4a7ab5" stroke-width="1.00"><circle cx="272.70" cy="61.30" r="7.10" fill="#f8fbfe"/><ellipse cx="272.70" cy="61.30" rx="3.19" ry="7.10"/><path d="M265.60,61.30 h14.20 M266.45,57.89 h12.50 M266.45,64.71 h12.50 M272.70,54.20 v14.20"/></g>
<g fill="none" stroke-width="1.1"><circle cx="320.1" cy="42.4" r="4.9" stroke="#777"/><rect x="309.6" y="40.4" width="8.4" height="8" stroke="#555" fill="#f1f1f1"/><path d="M318.7,42.9 l4.5,4.5 l-4.5,4.5 l-4.5,-4.5 z" stroke="#56799c" fill="#f4f8fb"/></g>
<path d="M328.80,44.00 h5.20 l-2.60,2.80 z" fill="#777"/>
<path d="M309,60.2 H320 L324.6,64.6 V66.4 H313.4 L311.2,69.8 H309 L311,65 Z" fill="#55a088"/>
<rect x="314.30" y="66.30" width="10.60" height="9.20" fill="#fafafa" stroke="#5a5a5a" stroke-width="1.2"/>
<path d="M316.4,69.3 h1.4 M318.8,69.3 h4 M316.4,72.5 h1.4 M318.8,72.5 h4" stroke="#888" stroke-width="1"/>
<rect x="312.40" y="85.00" width="10.60" height="8.00" fill="none" stroke="#888" stroke-width="0.9" stroke-dasharray="1,1.2"/>
<path d="M309.2,92.6 h2.2 l0.8,-1.3 h3 l0.8,1.3 h2 v6.2 h-8.8 z" fill="#6d6d6d"/><circle cx="313.6" cy="95.6" r="1.7" fill="#f1f1f1"/><circle cx="313.6" cy="95.6" r="0.8" fill="#6d6d6d"/>
<path d="M319.4,96.2 h5.6 M322.2,93.4 v5.6" stroke="#2f6fb0" stroke-width="1.6"/>
<path d="M328.80,90.00 h5.20 l-2.60,2.80 z" fill="#777"/>
<path d="M352,49.6 l13.8,-1.6 l0.2,11.4 l-14,1.2 z" fill="#e8400f"/>
<path d="M355.2,49 c-0.2,-2.4 0.8,-3.6 2.2,-3.6 c1.2,0 1.8,0.9 1.9,2 c0.3,-1 1,-1.6 1.9,-1.5 c1.2,0.1 1.7,1.2 1.6,2.6" fill="none" stroke="#e8400f" stroke-width="1.1"/>
<path d="M360.2,77 l5.7,3.2 v7 l-5.7,3.2 l-5.7,-3.2 v-7 z" fill="#1c73d2"/>
<path d="M355.4,83.6 l3.4,1.9 v3.9 l-3.4,1.9 l-3.4,-1.9 v-3.9 z" fill="#1c73d2" stroke="#f1f1f1" stroke-width="0.9"/>
<path d="M457.90,83.00 h5.20 l-2.60,2.80 z" fill="#777"/>
<rect x="471.00" y="45.20" width="16.00" height="15.70" fill="#f2ab1c" />
<path d="M475.6,47.8 v8.6 l2.2,1.4 l5,-2.8 l-0.2,-2.2 l-3.4,-1.2 l0.8,2 l-2,1.2 v-6.2 z" fill="#fff"/>
<rect x="471.00" y="76.00" width="16.00" height="15.90" fill="#1f8052" />
<path d="M473.6,79.2 h10.4 M473.6,81.8 h4.4 M473.6,84.2 h3" stroke="#8fd0ad" stroke-width="0.9"/>
<circle cx="481.6" cy="83.4" r="1.7" fill="#fff"/><path d="M478.4,90.4 v-2.6 a3.2,2.6 0 0 1 6.4,0 v2.6 z" fill="#fff"/>
<rect x="521.20" y="48.40" width="6.60" height="17.60" fill="#4a7ebb" /><rect x="529.10" y="40.20" width="6.90" height="25.80" fill="#e9c27a" /><rect x="537.20" y="45.10" width="6.80" height="20.90" fill="#7f7f7f" />
<g transform="translate(533.6,68.9) scale(0.86,1)" font-family="Liberation Sans" font-weight="bold" font-size="28.5"><text fill="#f4f7fa" stroke="#f4f7fa" stroke-width="2.6" stroke-linejoin="round">?</text><text fill="#4a76b0" stroke="#4a76b0" stroke-width="0.5">?</text></g>
<rect x="572.00" y="43.20" width="3.70" height="8.50" fill="#4a7ebb" /><rect x="577.10" y="37.30" width="3.90" height="14.40" fill="#d9c27e" /><rect x="582.20" y="40.80" width="3.80" height="10.90" fill="#6d6d6d" />
<rect x="604.30" y="37.30" width="5.50" height="15.60" fill="#4a7ebb" /><rect x="611.00" y="37.30" width="9.10" height="9.40" fill="#e9c27a" /><rect x="611.00" y="47.80" width="9.10" height="5.10" fill="#7f7f7f" />
<path d="M637.1,51.7 v-8 h3.8 v-5.4 h3.4 v5.6 h-3.6 v7.8 z" fill="#4a7ebb"/>
<rect x="644.60" y="38.20" width="3.60" height="8.60" fill="#e9c27a" /><rect x="648.40" y="46.00" width="3.80" height="5.70" fill="#7f7f7f" />
<g fill="none" stroke="#5b7595" stroke-width="1"><path d="M571.2,74.2 L576,60.6 L581.4,74.2 L586.4,62.4"/><path d="M571.2,63 L576,74.2 L581.4,61.6 L586.4,74.2"/><path d="M571.2,68.6 L576,72 L581.4,65 L586.4,70"/></g>
<rect x="604.30" y="66.60" width="2.50" height="8.20" fill="#4a7ebb" /><rect x="608.40" y="61.30" width="2.60" height="13.50" fill="#4a7ebb" /><rect x="612.10" y="64.30" width="3.00" height="10.50" fill="#4a7ebb" /><rect x="616.20" y="68.40" width="2.70" height="6.40" fill="#4a7ebb" />
<rect x="638.00" y="64.30" width="4.00" height="11.40" fill="#4a7ebb" /><rect x="643.20" y="67.20" width="4.10" height="8.50" fill="#e9c27a" /><rect x="648.30" y="69.60" width="3.70" height="6.10" fill="#7f7f7f" />
<path d="M639.8,61.2 L645.2,64 L650.2,66.4" stroke="#595959" stroke-width="1" fill="none"/><circle cx="639.8" cy="61.2" r="1.2" fill="#595959"/><circle cx="645.2" cy="64" r="1.2" fill="#595959"/><circle cx="650.2" cy="66.4" r="1.2" fill="#595959"/>
<circle cx="578.7" cy="90.5" r="7.5" fill="#4a7ebb"/>
<path d="M578.7,90.5 V83 A7.5,7.5 0 0 0 571.2,90.5 Z" fill="#e9c27a"/>
<path d="M578.7,90.5 H571.2 A7.5,7.5 0 0 0 574,96.4 Z" fill="#6d6d6d"/>
<path d="M578.7,83 V90.5 H571.2 M578.7,90.5 L574,96.4" stroke="#f1f1f1" stroke-width="0.9" fill="none"/>
<path d="M605.8,84.2 V96.6 H619.2" fill="none" stroke="#7f7f7f" stroke-width="1.1"/>
<rect x="607.8" y="92.6" width="1.6" height="1.6" fill="#4a7ebb"/>
<rect x="610.8" y="88.8" width="1.6" height="1.6" fill="#e9c27a"/>
<rect x="613.2" y="85.6" width="1.6" height="1.6" fill="#4a7ebb"/>
<rect x="615.8" y="91.8" width="1.6" height="1.6" fill="#e9c27a"/>
<rect x="617.2" y="88.6" width="1.6" height="1.6" fill="#7f7f7f"/>
<rect x="608.2" y="86.6" width="1.6" height="1.6" fill="#e9c27a"/>
<g fill="none" stroke="#8a8a8a" stroke-width="0.9"><path d="M645.0,83.6 L652.2,88.7 L649.4,97.0 L640.6,97.0 L637.8,88.7Z"/><path d="M645.0,86.6 L649.3,89.6 L647.6,94.6 L642.4,94.6 L640.7,89.6Z"/><path d="M645.0,91.0 L645.0,83.6"/><path d="M645.0,91.0 L652.2,88.7"/><path d="M645.0,91.0 L649.4,97.0"/><path d="M645.0,91.0 L640.6,97.0"/><path d="M645.0,91.0 L637.8,88.7"/><path d="M645.0,85.0 L648.0,90.0 L649.5,96.8 L643.0,93.5 L638.4,89.0 Z" stroke="#6a6a6a"/></g>
<path d="M591.00,44.00 h5.20 l-2.60,2.80 z" fill="#777"/>
<path d="M623.80,44.00 h5.20 l-2.60,2.80 z" fill="#777"/>
<path d="M657.10,44.00 h5.20 l-2.60,2.80 z" fill="#777"/>
<path d="M591.00,67.30 h5.20 l-2.60,2.80 z" fill="#777"/>
<path d="M623.80,67.30 h5.20 l-2.60,2.80 z" fill="#777"/>
<path d="M657.10,67.30 h5.20 l-2.60,2.80 z" fill="#777"/>
<path d="M591.00,89.90 h5.20 l-2.60,2.80 z" fill="#777"/>
<path d="M623.80,89.90 h5.20 l-2.60,2.80 z" fill="#777"/>
<path d="M657.10,89.90 h5.20 l-2.60,2.80 z" fill="#777"/>
<rect x="683.10" y="48.20" width="6.90" height="17.60" fill="#4a7ebb" /><rect x="691.10" y="40.20" width="6.80" height="25.60" fill="#e9c27a" /><rect x="699.10" y="45.10" width="6.70" height="8.90" fill="#7f7f7f" />
<rect x="697.60" y="53.50" width="14.80" height="14.70" fill="#fdfdfd" stroke="#7a7a7a" stroke-width="1"/>
<rect x="699.40" y="55.40" width="2.40" height="2.40" fill="#b3b3b3" /><rect x="702.80" y="55.40" width="7.60" height="2.40" fill="#b3b3b3" /><rect x="699.40" y="58.80" width="2.40" height="7.60" fill="#b3b3b3" />
<path d="M704.4,64 c3.4,0.2 4.8,-1.6 4.8,-4.6" fill="none" stroke="#3f7fb3" stroke-width="1.2"/><path d="M705.8,62.2 l-2,1.8 l2,1.8 M707.4,60.8 l1.8,-1.9 l1.8,1.9" fill="none" stroke="#3f7fb3" stroke-width="1.1"/>
<path d="M694.80,94.20 h5.20 l-2.60,2.80 z" fill="#777"/>
<path d="M721.4,112.4 h-0.1 v5.8 h5.9 M723.2,114.2 l3.4,3.4 M724.4,117.8 h2.4 v-2.4" fill="none" stroke="#777" stroke-width="0.9"/>
<path d="M743,45.4 q4.4,-2.4 9,-1.6 v22.8 q-4.6,-0.9 -9,0.8 z" fill="#3f78b8"/><path d="M747.2,43.9 v22.6" stroke="#dfe9f4" stroke-width="0.8"/>
<path d="M753.1,41 q4.5,-1.4 9,0 v18 h-9 z" fill="#e9c27a"/><path d="M757.6,40.2 v14" stroke="#f6e6c0" stroke-width="0.8"/>
<path d="M763.3,43.8 q4.6,-0.8 8.6,1.6 v22 q-4,-1.7 -8.6,-0.8 z" fill="#8e8e8e"/><path d="M767.4,44 v22.6" stroke="#d8d8d8" stroke-width="0.8"/>
<g fill="none" stroke="#6e6e6e" stroke-width="0.90"><circle cx="757.50" cy="59.80" r="7.20" fill="#fcfcfc"/><ellipse cx="757.50" cy="59.80" rx="3.24" ry="7.20"/><path d="M750.30,59.80 h14.40 M751.16,56.34 h12.67 M751.16,63.26 h12.67 M757.50,52.60 v14.40"/></g>
<path d="M769.60,94.20 h5.20 l-2.60,2.80 z" fill="#777"/>
<path d="M797.6,39 V65.5 M794.4,43.4 H823.8 M794.4,61.3 H823.8" stroke="#7f7f7f" stroke-width="1" fill="none"/>
<path d="M798,56 L800.3,57.4 L806.2,48.4 L810.9,58 L819.1,47.8 L822.8,53.4" stroke="#5b7595" stroke-width="1.2" fill="none"/>
<path d="M839.4,39 V65.5 M835.9,43.4 H865.9 M835.9,61 H865.9" stroke="#7f7f7f" stroke-width="1" fill="none"/>
<rect x="840.80" y="51.00" width="3.90" height="8.80" fill="#4a7ebb" /><rect x="847.00" y="47.80" width="4.00" height="12.00" fill="#4a7ebb" /><rect x="853.20" y="52.80" width="3.80" height="7.00" fill="#4a7ebb" /><rect x="859.00" y="54.90" width="3.90" height="4.90" fill="#4a7ebb" />
<path d="M885.4,39 V65.5 M882.2,43.4 H912.2 M882.2,61 H912.2" stroke="#7f7f7f" stroke-width="1" fill="none"/>
<rect x="887.00" y="46.00" width="3.20" height="5.70" fill="#4a7ebb" /><rect x="892.00" y="46.00" width="3.00" height="5.70" fill="#4a7ebb" /><rect x="906.00" y="46.00" width="3.20" height="5.70" fill="#4a7ebb" /><rect x="896.30" y="53.10" width="3.00" height="5.70" fill="#cf5b41" /><rect x="901.00" y="53.10" width="3.20" height="5.70" fill="#cf5b41" />
<rect x="953.60" y="39.40" width="27.20" height="26.60" fill="#fff" stroke="#7a7a7a" stroke-width="1"/>
<rect x="953.20" y="39.00" width="28.00" height="3.60" fill="#6d6d6d" />
<rect x="956.20" y="45.20" width="21.60" height="3.60" fill="#4a7ebb" /><rect x="956.20" y="52.20" width="7.80" height="3.60" fill="#4a7ebb" /><rect x="956.20" y="59.20" width="21.60" height="3.60" fill="#bccfe6" />
<path d="M961.4,49.8 h17.8 l-7.2,8 v6.6 h-3 v-6.6 z" fill="#7a7a7a" stroke="#fff" stroke-width="0.8"/>
<rect x="1016.50" y="43.20" width="27.00" height="15.00" fill="#fff" stroke="#7a7a7a" stroke-width="0.9"/>
<rect x="1016.10" y="42.90" width="27.80" height="3.30" fill="#6d6d6d" />
<rect x="1018.60" y="49.60" width="3.00" height="2.40" fill="#b3b3b3" />
<rect x="1022.70" y="49.60" width="3.00" height="2.40" fill="#4a7ebb" />
<rect x="1026.80" y="49.60" width="3.00" height="2.40" fill="#4a7ebb" />
<rect x="1030.90" y="49.60" width="3.00" height="2.40" fill="#b3b3b3" />
<rect x="1035.00" y="49.60" width="3.00" height="2.40" fill="#b3b3b3" />
<rect x="1039.10" y="49.60" width="3.00" height="2.40" fill="#b3b3b3" />
<path d="M1027.6,52.8 h17.6 l-7.2,8 v7.6 h-3 v-7.6 z" fill="#7a7a7a" stroke="#f8f8f8" stroke-width="0.8"/>
<g fill="none" stroke="#8c8c8c" stroke-width="1.10"><circle cx="1085.70" cy="51.10" r="12.20" fill="#fbfbfb"/><ellipse cx="1085.70" cy="51.10" rx="5.49" ry="12.20"/><path d="M1073.50,51.10 h24.40 M1074.96,45.24 h21.47 M1074.96,56.96 h21.47 M1085.70,38.90 v24.40"/></g>
<g fill="none" stroke="#3f6aa5" stroke-width="2.6"><rect x="1085.6" y="61" width="10.4" height="6.4" rx="3.2" stroke="#f1f1f1" stroke-width="4.6"/><rect x="1092.6" y="61" width="10.4" height="6.4" rx="3.2" stroke="#f1f1f1" stroke-width="4.6"/><rect x="1085.6" y="61" width="10.4" height="6.4" rx="3.2"/><rect x="1092.6" y="61" width="10.4" height="6.4" rx="3.2"/></g>
<rect x="1120.50" y="35.50" width="29.00" height="29.00" fill="#fdfdfd" stroke="#cfcfcf" stroke-width="1"/>
<text x="1130.4" y="55.6" font-family="Liberation Sans" font-weight="bold" font-style="italic" font-size="14.5" fill="#4a7ebb">A</text>
<path d="M1132.70,92.40 h5.20 l-2.60,2.80 z" fill="#777"/>
<g fill="none" stroke="#4a6fa5" stroke-linecap="round"><path d="M1167,42.8 q1.3,-2 3.6,-1.9 h7.4" stroke-width="2"/><path d="M1171.2,41.6 q0,5.6 -2.6,8.6" stroke-width="1.9"/><path d="M1175.2,41.6 v6.2 q0,2.2 1.9,2.2" stroke-width="1.9"/></g>
<text x="1166" y="73.8" font-family="Liberation Serif" font-weight="bold" font-size="17.5" fill="#3f72b0">Ω</text>
<path d="M1230.90,44.20 h5.20 l-2.60,2.80 z" fill="#777"/>
<path d="M1345.4,116.8 l4,-3.8 l4,3.8" fill="none" stroke="#666" stroke-width="1.6"/>
<path d="M91.30,144.60 h6.00 l-3.00,3.20 z" fill="#777"/>
<rect x="119.4" y="143.2" width="1.4" height="1.4" fill="#b0b0b0"/>
<rect x="119.4" y="147.2" width="1.4" height="1.4" fill="#b0b0b0"/>
<rect x="119.4" y="151.2" width="1.4" height="1.4" fill="#b0b0b0"/>
<path d="M150,143.4 l7.8,7.8 M157.8,143.4 l-7.8,7.8" stroke="#c2c2c2" stroke-width="1.3"/>
<path d="M184.6,148 l3.4,3.4 l6.8,-8" fill="none" stroke="#c2c2c2" stroke-width="1.5"/>
<text x="220.6" y="151.6" font-family="Liberation Serif" font-style="italic" font-size="14" fill="#555">f</text><text x="225.4" y="152.4" font-family="Liberation Serif" font-style="italic" font-size="9.5" fill="#555">x</text>
<path d="M1347.2,144.6 l3.6,3.6 l3.6,-3.6" fill="none" stroke="#666" stroke-width="1.4"/>
<path d="M19.6,176.8 V186.4 H9.4 Z" fill="#b4b4b4"/>
<path d="M270.50,218.30 h6.00 l-3.00,3.40 z" fill="#6a6a6a"/>
<path d="M350.50,218.30 h6.00 l-3.00,3.40 z" fill="#6a6a6a"/>
<path d="M498.50,218.30 h6.00 l-3.00,3.40 z" fill="#6a6a6a"/>
<path d="M428.90,221.20 h4.20 l-2.10,2.40 z" fill="#6a6a6a"/>
<path d="M437,224 v-8.4 M435.2,217.4 l1.8,-1.9 l1.8,1.9" fill="none" stroke="#6a6a6a" stroke-width="0.9"/>
<path d="M509.4,444.8 v4.2 h-4.2" fill="none" stroke="#2f5597" stroke-width="1.6"/>
<path d="M1350.2,181.6 h7 l-3.5,-3.8 z" fill="#777"/>
<path d="M1350.2,644.6 h7 l-3.5,3.8 z" fill="#777"/>
<path d="M843.8,663 v7.4 l-4,-3.7 z" fill="#666"/>
<path d="M1333.6,663 v7.4 l4,-3.7 z" fill="#666"/>
<rect x="817.4" y="662.2" width="1.4" height="1.4" fill="#a8a8a8"/>
<rect x="817.4" y="666.2" width="1.4" height="1.4" fill="#a8a8a8"/>
<rect x="817.4" y="670.2" width="1.4" height="1.4" fill="#a8a8a8"/>
<path d="M29,662.6 v7 l-3.8,-3.5 z" fill="#c6c6c6"/><path d="M53.8,662.6 v7 l3.8,-3.5 z" fill="#c6c6c6"/>
<circle cx="215" cy="666" r="7.4" fill="none" stroke="#6a6a6a" stroke-width="1.1"/><path d="M211,666 h8 M215,662 v8" stroke="#6a6a6a" stroke-width="1.4"/>
<circle cx="83.4" cy="686.8" r="2.6" fill="#8a8a8a"/><rect x="86.60" y="684.60" width="6.80" height="3.00" fill="#8a8a8a" />
<rect x="81.40" y="689.60" width="12.00" height="7.00" fill="none" stroke="#8a8a8a" stroke-width="0.9"/>
<path d="M81.4,692 h12 M81.4,694.4 h12 M85.4,689.6 v7 M89.4,689.6 v7" stroke="#8a8a8a" stroke-width="0.8"/>
<g fill="none" stroke="#666" stroke-width="1.2"><rect x="1081.4" y="684.4" width="12" height="12"/><path d="M1085.4,684.4 v12 M1089.4,684.4 v12 M1081.4,688.4 h12 M1081.4,692.4 h12"/><rect x="1119.4" y="684.4" width="13" height="12"/><rect x="1122.6" y="687.2" width="6.6" height="6.6" stroke-width="1"/><path d="M1124,689.4 h3.8 M1124,691.6 h3.8" stroke-width="0.8"/><rect x="1157.8" y="684.4" width="12.6" height="12"/><path d="M1161.8,684.4 v7 M1165.4,684.4 v7 M1157.8,691.4 h7.6" stroke-width="1.1"/></g>
<path d="M1188,690.6 h5.4" stroke="#555" stroke-width="1.5"/><path d="M1198.3,690.6 H1297.4" stroke="#8a8a8a" stroke-width="1"/>
<rect x="1246.20" y="685.00" width="3.60" height="10.80" fill="#555" />
<path d="M1301.8,690.6 h7.8 M1305.7,686.7 v7.8" stroke="#555" stroke-width="1.5"/>
</svg>
<span class="t" style="left:14.20px;top:12.30px;font-size:13px;color:#fff;letter-spacing:-0.890px;">Datei</span>
<span class="t" style="left:73.50px;top:12.30px;font-size:13px;color:#fff;letter-spacing:-0.742px;">Start</span>
<span class="t" style="left:203.00px;top:12.30px;font-size:13px;color:#fff;letter-spacing:-0.597px;">Seitenlayout</span>
<span class="t" style="left:297.20px;top:12.30px;font-size:13px;color:#fff;letter-spacing:-0.665px;">Formeln</span>
<span class="t" style="left:370.30px;top:12.30px;font-size:13px;color:#fff;letter-spacing:-1.051px;">Daten</span>
<span class="t" style="left:430.20px;top:12.30px;font-size:13px;color:#fff;letter-spacing:-0.605px;">Überprüfen</span>
<span class="t" style="left:519.10px;top:12.30px;font-size:13px;color:#fff;letter-spacing:-0.423px;">Ansicht</span>
<span class="t" style="left:588.10px;top:12.30px;font-size:13px;color:#fff;letter-spacing:-0.465px;">Entwicklertools</span>
<span class="t" style="left:697.20px;top:12.30px;font-size:13px;color:#fff;letter-spacing:-0.485px;">Acrobat</span>
<span class="t" style="left:1202.50px;top:12.30px;font-size:13px;color:#fff;letter-spacing:-0.507px;">Anmelden</span>
<span class="t" style="left:1293.50px;top:12.30px;font-size:13px;color:#fff;letter-spacing:-0.818px;">Freigeben</span>
<span class="t" style="left:127.30px;top:12.30px;font-size:13px;color:#217346;letter-spacing:-0.661px;">Einfügen</span>
<span class="t" style="left:785.40px;top:12.30px;font-size:13px;color:#abd0bb;letter-spacing:-0.695px;">Was möchten Sie tun?</span>
<span class="t" style="left:4.50px;top:73.64px;font-size:12px;color:#444;letter-spacing:-0.197px;">PivotTable</span>
<span class="t" style="left:63.40px;top:73.64px;font-size:12px;color:#444;letter-spacing:-0.083px;">Empfohlene</span>
<span class="t" style="left:66.10px;top:89.44px;font-size:12px;color:#444;letter-spacing:-0.327px;">PivotTables</span>
<span class="t" style="left:187.60px;top:73.64px;font-size:12px;color:#444;letter-spacing:-0.357px;">Bilder</span>
<span class="t" style="left:225.70px;top:73.64px;font-size:12px;color:#444;letter-spacing:-0.038px;">Onlinegrafiken</span>
<span class="t" style="left:370.40px;top:47.74px;font-size:12px;color:#444;letter-spacing:-0.572px;">Store</span>
<span class="t" style="left:370.40px;top:78.94px;font-size:12px;color:#444;letter-spacing:0.048px;">Meine Add-Ins</span>
<span class="t" style="left:501.60px;top:73.64px;font-size:12px;color:#444;letter-spacing:-0.072px;">Empfohlene</span>
<span class="t" style="left:502.60px;top:89.44px;font-size:12px;color:#444;letter-spacing:-0.077px;">Diagramme</span>
<span class="t" style="left:669.50px;top:73.64px;font-size:12px;color:#444;letter-spacing:-0.070px;">PivotChart</span>
<span class="t" style="left:747.80px;top:73.64px;font-size:12px;color:#444;letter-spacing:-0.322px;">3D-</span>
<span class="t" style="left:740.30px;top:89.44px;font-size:12px;color:#444;letter-spacing:-0.422px;">Karte</span>
<span class="t" style="left:796.70px;top:73.64px;font-size:12px;color:#444;letter-spacing:-0.290px;">Linie</span>
<span class="t" style="left:837.60px;top:73.64px;font-size:12px;color:#444;letter-spacing:-0.826px;">Säule</span>
<span class="t" style="left:874.50px;top:73.64px;font-size:12px;color:#444;letter-spacing:-0.055px;">Gewinn/</span>
<span class="t" style="left:879.00px;top:89.44px;font-size:12px;color:#444;letter-spacing:-0.331px;">Verlust</span>
<span class="t" style="left:933.70px;top:73.64px;font-size:12px;color:#444;letter-spacing:-0.055px;">Datenschnitt</span>
<span class="t" style="left:1005.30px;top:73.64px;font-size:12px;color:#444;letter-spacing:-0.266px;">Zeitachse</span>
<span class="t" style="left:1077.60px;top:73.64px;font-size:12px;color:#444;letter-spacing:-0.172px;">Link</span>
<span class="t" style="left:1125.80px;top:72.24px;font-size:12px;color:#444;letter-spacing:-0.539px;">Text</span>
<span class="t" style="left:1184.40px;top:39.84px;font-size:12px;color:#444;letter-spacing:-0.229px;">Formel</span>
<span class="t" style="left:1184.40px;top:62.74px;font-size:12px;color:#444;letter-spacing:-0.123px;">Symbol</span>
<span class="t" style="left:134.70px;top:73.64px;font-size:12px;color:#a8924f;letter-spacing:-0.605px;">Tabelle</span>
<span class="t" style="left:65.40px;top:109.12px;font-size:11.2px;color:#666;letter-spacing:0.030px;">Tabellen</span>
<span class="t" style="left:225.70px;top:109.12px;font-size:11.2px;color:#666;letter-spacing:0.343px;">Illustrationen</span>
<span class="t" style="left:399.30px;top:109.12px;font-size:11.2px;color:#666;letter-spacing:0.106px;">Add-Ins</span>
<span class="t" style="left:576.40px;top:109.12px;font-size:11.2px;color:#666;letter-spacing:-0.079px;">Diagramme</span>
<span class="t" style="left:740.30px;top:109.12px;font-size:11.2px;color:#666;letter-spacing:0.196px;">Touren</span>
<span class="t" style="left:828.40px;top:109.12px;font-size:11.2px;color:#666;letter-spacing:-0.015px;">Sparklines</span>
<span class="t" style="left:981.60px;top:109.12px;font-size:11.2px;color:#666;letter-spacing:0.165px;">Filter</span>
<span class="t" style="left:1077.60px;top:109.12px;font-size:11.2px;color:#666;letter-spacing:-0.177px;">Link</span>
<span class="t" style="left:1180.20px;top:109.12px;font-size:11.2px;color:#666;letter-spacing:-0.189px;">Symbole</span>
<span class="t" style="left:10.60px;top:141.92px;font-size:12.5px;color:#444;letter-spacing:-0.673px;">F18</span>
<span class="t" style="left:65.49px;top:174.14px;font-size:12px;color:#262626;">A</span>
<span class="t" style="left:151.49px;top:174.14px;font-size:12px;color:#262626;">B</span>
<span class="t" style="left:234.66px;top:174.14px;font-size:12px;color:#262626;">C</span>
<span class="t" style="left:318.16px;top:174.14px;font-size:12px;color:#262626;">D</span>
<span class="t" style="left:398.49px;top:174.14px;font-size:12px;color:#262626;">E</span>
<span class="t" style="left:472.83px;top:174.14px;font-size:12px;color:#217346;">F</span>
<span class="t" style="left:545.83px;top:174.14px;font-size:12px;color:#262626;">G</span>
<span class="t" style="left:626.16px;top:174.14px;font-size:12px;color:#262626;">H</span>
<span class="t" style="left:708.83px;top:174.14px;font-size:12px;color:#262626;">I</span>
<span class="t" style="left:787.50px;top:174.14px;font-size:12px;color:#262626;">J</span>
<span class="t" style="left:866.49px;top:174.14px;font-size:12px;color:#262626;">K</span>
<span class="t" style="left:947.16px;top:174.14px;font-size:12px;color:#262626;">L</span>
<span class="t" style="left:1025.50px;top:174.14px;font-size:12px;color:#262626;">M</span>
<span class="t" style="left:1106.16px;top:174.14px;font-size:12px;color:#262626;">N</span>
<span class="t" style="left:1185.83px;top:174.14px;font-size:12px;color:#262626;">O</span>
<span class="t" style="left:1266.49px;top:174.14px;font-size:12px;color:#262626;">P</span>
<span class="t" style="left:7.76px;top:194.84px;font-size:12px;color:#262626;">1</span>
<span class="t" style="left:7.76px;top:214.84px;font-size:12px;color:#262626;">2</span>
<span class="t" style="left:7.76px;top:234.84px;font-size:12px;color:#262626;">3</span>
<span class="t" style="left:7.76px;top:254.84px;font-size:12px;color:#262626;">4</span>
<span class="t" style="left:7.76px;top:274.84px;font-size:12px;color:#262626;">5</span>
<span class="t" style="left:7.76px;top:294.84px;font-size:12px;color:#262626;">6</span>
<span class="t" style="left:7.76px;top:314.84px;font-size:12px;color:#262626;">7</span>
<span class="t" style="left:7.76px;top:334.84px;font-size:12px;color:#262626;">8</span>
<span class="t" style="left:7.76px;top:354.84px;font-size:12px;color:#262626;">9</span>
<span class="t" style="left:4.50px;top:374.84px;font-size:12px;color:#262626;letter-spacing:-0.159px;">10</span>
<span class="t" style="left:4.50px;top:394.84px;font-size:12px;color:#262626;letter-spacing:0.731px;">11</span>
<span class="t" style="left:4.50px;top:414.84px;font-size:12px;color:#262626;letter-spacing:-0.159px;">12</span>
<span class="t" style="left:4.50px;top:434.84px;font-size:12px;color:#262626;letter-spacing:-0.159px;">13</span>
<span class="t" style="left:4.50px;top:454.84px;font-size:12px;color:#262626;letter-spacing:-0.159px;">14</span>
<span class="t" style="left:4.50px;top:474.84px;font-size:12px;color:#262626;letter-spacing:-0.159px;">15</span>
<span class="t" style="left:4.50px;top:494.84px;font-size:12px;color:#262626;letter-spacing:-0.159px;">16</span>
<span class="t" style="left:4.50px;top:514.84px;font-size:12px;color:#262626;letter-spacing:-0.159px;">17</span>
<span class="t" style="left:4.50px;top:534.84px;font-size:12px;color:#217346;letter-spacing:-0.159px;">18</span>
<span class="t" style="left:4.50px;top:554.84px;font-size:12px;color:#262626;letter-spacing:-0.159px;">19</span>
<span class="t" style="left:4.50px;top:574.84px;font-size:12px;color:#262626;letter-spacing:-0.159px;">20</span>
<span class="t" style="left:4.50px;top:594.84px;font-size:12px;color:#262626;letter-spacing:-0.159px;">21</span>
<span class="t" style="left:4.50px;top:614.84px;font-size:12px;color:#262626;letter-spacing:-0.159px;">22</span>
<span class="t" style="left:4.50px;top:634.84px;font-size:12px;color:#262626;letter-spacing:-0.159px;">23</span>
<span class="t" style="left:26.40px;top:194.96px;font-size:12.1px;color:#000;letter-spacing:1.102px;">Lebensmittel</span>
<span class="t" style="left:118.40px;top:194.96px;font-size:12.1px;color:#000;letter-spacing:1.066px;">gesamt</span>
<span class="t" style="left:75.00px;top:214.96px;font-size:12.1px;color:#000;letter-spacing:0.080px;">104,96</span>
<span class="t" style="left:26.40px;top:234.96px;font-size:12.1px;color:#000;letter-spacing:1.102px;">Lebensmittel</span>
<span class="t" style="left:118.40px;top:234.96px;font-size:12.1px;color:#000;letter-spacing:0.917px;">Einkäufe</span>
<span class="t" style="left:105.83px;top:254.96px;font-size:12.1px;color:#000;">4</span>
<span class="t" style="left:26.40px;top:274.96px;font-size:12.1px;color:#000;letter-spacing:1.102px;">Lebensmittel</span>
<span class="t" style="left:118.40px;top:274.96px;font-size:12.1px;color:#000;letter-spacing:1.694px;">Mittelwert</span>
<span class="t" style="left:80.90px;top:294.96px;font-size:12.1px;color:#000;letter-spacing:0.309px;">26,24</span>
<span class="t" style="left:198.40px;top:194.96px;font-size:12.1px;color:#000;letter-spacing:1.145px;">Kostenfaktor</span>
<span class="t" style="left:285.40px;top:194.96px;font-size:12.1px;color:#000;letter-spacing:0.772px;">Betrag</span>
<span class="t" style="left:466.50px;top:194.96px;font-size:12.1px;color:#000;letter-spacing:0.516px;">KW</span>
<span class="t" style="left:198.40px;top:234.96px;font-size:12.1px;color:#000;letter-spacing:1.605px;">Miete</span>
<span class="t" style="left:321.10px;top:234.96px;font-size:12.1px;color:#000;letter-spacing:0.260px;">600,00</span>
<span class="t" style="left:376.20px;top:234.96px;font-size:12.1px;color:#000;letter-spacing:0.395px;">01.11.2019</span>
<span class="t" style="left:469.55px;top:234.96px;font-size:12.1px;color:#000;letter-spacing:0.447px;">44</span>
<span class="t" style="left:198.40px;top:254.96px;font-size:12.1px;color:#000;letter-spacing:0.934px;">Strom</span>
<span class="t" style="left:327.70px;top:254.96px;font-size:12.1px;color:#000;letter-spacing:0.359px;">50,00</span>
<span class="t" style="left:376.20px;top:254.96px;font-size:12.1px;color:#000;letter-spacing:0.395px;">01.11.2019</span>
<span class="t" style="left:469.55px;top:254.96px;font-size:12.1px;color:#000;letter-spacing:0.447px;">44</span>
<span class="t" style="left:198.40px;top:274.96px;font-size:12.1px;color:#000;letter-spacing:1.102px;">Lebensmittel</span>
<span class="t" style="left:327.70px;top:274.96px;font-size:12.1px;color:#000;letter-spacing:0.359px;">12,30</span>
<span class="t" style="left:376.20px;top:274.96px;font-size:12.1px;color:#000;letter-spacing:0.395px;">05.11.2019</span>
<span class="t" style="left:469.55px;top:274.96px;font-size:12.1px;color:#000;letter-spacing:0.447px;">45</span>
<span class="t" style="left:198.40px;top:294.96px;font-size:12.1px;color:#000;letter-spacing:0.906px;">Sprit</span>
<span class="t" style="left:327.70px;top:294.96px;font-size:12.1px;color:#000;letter-spacing:0.359px;">76,80</span>
<span class="t" style="left:376.20px;top:294.96px;font-size:12.1px;color:#000;letter-spacing:0.395px;">09.11.2019</span>
<span class="t" style="left:469.55px;top:294.96px;font-size:12.1px;color:#000;letter-spacing:0.447px;">45</span>
<span class="t" style="left:198.40px;top:314.96px;font-size:12.1px;color:#000;letter-spacing:1.102px;">Lebensmittel</span>
<span class="t" style="left:327.70px;top:314.96px;font-size:12.1px;color:#000;letter-spacing:0.359px;">25,94</span>
<span class="t" style="left:376.20px;top:314.96px;font-size:12.1px;color:#000;letter-spacing:0.395px;">17.11.2019</span>
<span class="t" style="left:469.55px;top:314.96px;font-size:12.1px;color:#000;letter-spacing:0.447px;">46</span>
<span class="t" style="left:198.40px;top:334.96px;font-size:12.1px;color:#000;letter-spacing:0.897px;">Sozialleben</span>
<span class="t" style="left:327.70px;top:334.96px;font-size:12.1px;color:#000;letter-spacing:0.359px;">13,50</span>
<span class="t" style="left:376.20px;top:334.96px;font-size:12.1px;color:#000;letter-spacing:0.395px;">20.11.2019</span>
<span class="t" style="left:469.55px;top:334.96px;font-size:12.1px;color:#000;letter-spacing:0.447px;">47</span>
<span class="t" style="left:198.40px;top:354.96px;font-size:12.1px;color:#000;letter-spacing:1.102px;">Lebensmittel</span>
<span class="t" style="left:327.70px;top:354.96px;font-size:12.1px;color:#000;letter-spacing:0.359px;">45,20</span>
<span class="t" style="left:376.20px;top:354.96px;font-size:12.1px;color:#000;letter-spacing:0.395px;">22.11.2019</span>
<span class="t" style="left:469.55px;top:354.96px;font-size:12.1px;color:#000;letter-spacing:0.447px;">47</span>
<span class="t" style="left:198.40px;top:374.96px;font-size:12.1px;color:#000;letter-spacing:1.605px;">Miete</span>
<span class="t" style="left:321.10px;top:374.96px;font-size:12.1px;color:#000;letter-spacing:0.260px;">600,00</span>
<span class="t" style="left:376.20px;top:374.96px;font-size:12.1px;color:#000;letter-spacing:0.297px;">01.12.2019</span>
<span class="t" style="left:469.55px;top:374.96px;font-size:12.1px;color:#000;letter-spacing:0.447px;">48</span>
<span class="t" style="left:198.40px;top:394.96px;font-size:12.1px;color:#000;letter-spacing:0.934px;">Strom</span>
<span class="t" style="left:327.70px;top:394.96px;font-size:12.1px;color:#000;letter-spacing:0.359px;">50,00</span>
<span class="t" style="left:376.20px;top:394.96px;font-size:12.1px;color:#000;letter-spacing:0.297px;">01.12.2019</span>
<span class="t" style="left:469.55px;top:394.96px;font-size:12.1px;color:#000;letter-spacing:0.447px;">48</span>
<span class="t" style="left:198.40px;top:414.96px;font-size:12.1px;color:#000;letter-spacing:0.897px;">Sozialleben</span>
<span class="t" style="left:327.70px;top:414.96px;font-size:12.1px;color:#000;letter-spacing:0.359px;">14,70</span>
<span class="t" style="left:376.20px;top:414.96px;font-size:12.1px;color:#000;letter-spacing:0.297px;">05.12.2019</span>
<span class="t" style="left:469.55px;top:414.96px;font-size:12.1px;color:#000;letter-spacing:0.447px;">49</span>
<span class="t" style="left:198.40px;top:434.96px;font-size:12.1px;color:#000;letter-spacing:1.102px;">Lebensmittel</span>
<span class="t" style="left:327.70px;top:434.96px;font-size:12.1px;color:#000;letter-spacing:0.359px;">21,52</span>
<span class="t" style="left:376.20px;top:434.96px;font-size:12.1px;color:#000;letter-spacing:0.297px;">09.12.2019</span>
<span class="t" style="left:469.55px;top:434.96px;font-size:12.1px;color:#000;letter-spacing:0.447px;">50</span>
<span class="t" style="left:198.40px;top:494.96px;font-size:12.1px;color:#000;letter-spacing:1.207px;">Summe</span>
<span class="t" style="left:312.90px;top:494.96px;font-size:12.1px;color:#000;letter-spacing:0.464px;">1509,96</span>
<span class="t" style="left:198.20px;top:214.06px;font-size:12.1px;color:#fff;font-weight:bold;letter-spacing:0.445px;">Spalte1</span>
<span class="t" style="left:285.40px;top:214.06px;font-size:12.1px;color:#fff;font-weight:bold;letter-spacing:0.428px;">Spalte2</span>
<span class="t" style="left:365.30px;top:214.06px;font-size:12.1px;color:#fff;font-weight:bold;letter-spacing:0.395px;">Spalte3</span>
<span class="t" style="left:454.00px;top:214.06px;font-size:12.1px;color:#fff;font-weight:bold;letter-spacing:0.541px;">Spalte</span>
<span class="t" style="left:845.20px;top:262.23px;font-size:15.8px;color:#595959;letter-spacing:0.789px;">Diagrammtitel</span>
<span class="t" style="left:587.50px;top:559.82px;font-size:11.2px;color:#595959;letter-spacing:0.185px;">Miete</span>
<span class="t" style="left:629.10px;top:559.82px;font-size:11.2px;color:#595959;letter-spacing:-0.086px;">Strom</span>
<span class="t" style="left:672.50px;top:559.82px;font-size:11.2px;color:#595959;letter-spacing:-0.049px;">Lebensmittel</span>
<span class="t" style="left:749.10px;top:559.82px;font-size:11.2px;color:#595959;letter-spacing:-0.154px;">Sprit</span>
<span class="t" style="left:785.30px;top:559.82px;font-size:11.2px;color:#595959;letter-spacing:-0.058px;">Lebensmittel</span>
<span class="t" style="left:861.80px;top:559.82px;font-size:11.2px;color:#595959;letter-spacing:-0.266px;">Sozialleben</span>
<span class="t" style="left:930.40px;top:559.82px;font-size:11.2px;color:#595959;letter-spacing:-0.031px;">Lebensmittel</span>
<span class="t" style="left:1007.30px;top:559.82px;font-size:11.2px;color:#595959;letter-spacing:0.310px;">Miete</span>
<span class="t" style="left:1049.20px;top:559.82px;font-size:11.2px;color:#595959;letter-spacing:-0.111px;">Strom</span>
<span class="t" style="left:1092.10px;top:559.82px;font-size:11.2px;color:#595959;letter-spacing:-0.256px;">Sozialleben</span>
<span class="t" style="left:1160.90px;top:559.82px;font-size:11.2px;color:#595959;letter-spacing:-0.049px;">Lebensmittel</span>
<span class="t" style="left:110.70px;top:658.80px;font-size:13px;color:#217346;font-weight:bold;letter-spacing:0.005px;">Tabelle1</span>
<span class="t" style="left:5.50px;top:684.78px;font-size:11.6px;color:#444;letter-spacing:-0.339px;">Bereit</span>
<span class="t" style="left:1325.70px;top:685.38px;font-size:11.6px;color:#444;letter-spacing:-0.844px;">100 %</span>
</body></html>
